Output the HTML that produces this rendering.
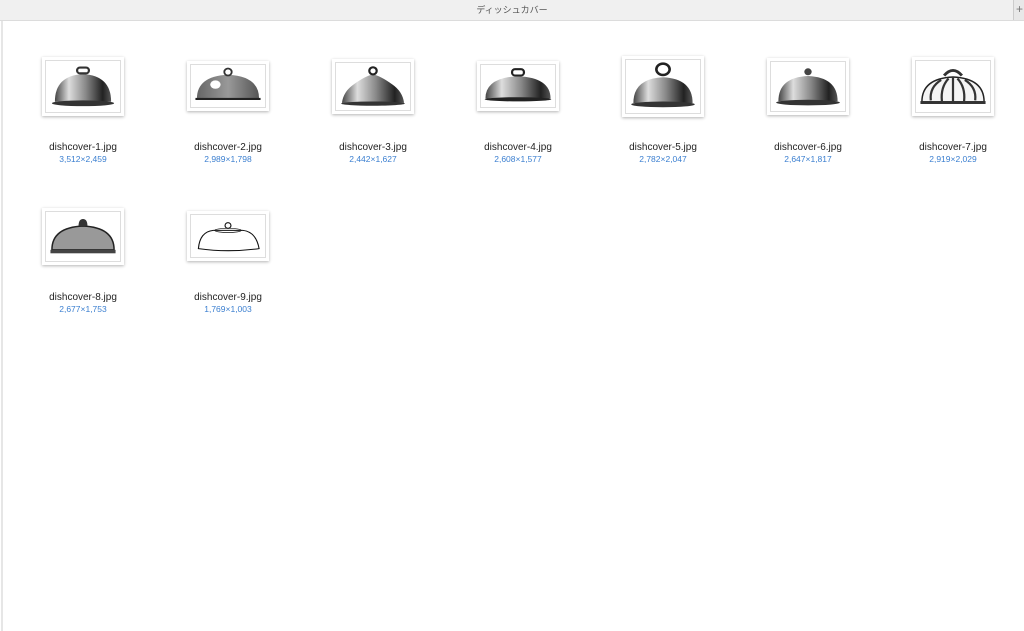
<!DOCTYPE html>
<html><head><meta charset="utf-8"><style>
html,body{margin:0;padding:0;width:1024px;height:631px;overflow:hidden;background:#fff;font-family:"Liberation Sans","Noto Sans CJK JP",sans-serif;}
.bar{position:absolute;left:0;top:0;width:1024px;height:20px;background:#f0f0f0;border-bottom:1px solid #dcdcdc;}
.title{position:absolute;left:0;width:1024px;top:3px;text-align:center;font-size:9px;color:#555;}
.rb{position:absolute;left:1013px;top:0;width:11px;height:20px;border-left:1px solid #ccc;background:#e8e8e8;color:#777;font-size:12px;line-height:18px;text-align:center;}
.lb{position:absolute;left:1px;top:21px;width:2px;height:610px;background:#e6e6e6;}
.th{position:absolute;background:#fff;box-shadow:0 1px 3px rgba(0,0,0,.3);box-sizing:border-box;padding:3px;}
.th svg{display:block;width:100%;height:100%;border:1px solid #ddd;box-sizing:border-box;}
.nm{position:absolute;width:140px;text-align:center;font-size:10px;color:#222;}
.dm{position:absolute;width:140px;text-align:center;font-size:8.5px;color:#3b7fd0;}
</style></head><body>
<div class="bar"><div class="title">ディッシュカバー</div><div class="rb">+</div></div>
<div class="lb"></div>
<svg width="0" height="0" style="position:absolute">
<defs>
<linearGradient id="g" x1="0" x2="1"><stop offset="0" stop-color="#444"/><stop offset=".25" stop-color="#ddd"/><stop offset=".55" stop-color="#888"/><stop offset=".85" stop-color="#222"/><stop offset="1" stop-color="#555"/></linearGradient>
<linearGradient id="g2" x1="0" x2="1"><stop offset="0" stop-color="#666"/><stop offset=".5" stop-color="#999"/><stop offset="1" stop-color="#555"/></linearGradient>
</defs></svg>

<div class="th" style="left:42px;top:57px;width:82px;height:59px"><svg viewBox="0 0 100 70" preserveAspectRatio="none"><path d="M12 56 Q12 20 50 18 Q88 20 88 56Z" fill="url(#g)"/><ellipse cx="50" cy="58" rx="42" ry="4" fill="#333"/><rect x="42" y="9" width="16" height="8" rx="4" fill="none" stroke="#333" stroke-width="3"/></svg></div>
<div class="nm" style="left:13px;top:142px">dishcover-1.jpg</div><div class="dm" style="left:13px;top:154px">3,512×2,459</div>

<div class="th" style="left:187px;top:61px;width:82px;height:50px"><svg viewBox="0 0 100 60" preserveAspectRatio="none"><path d="M8 48 Q8 16 50 14 Q92 16 92 48Z" fill="url(#g2)"/><ellipse cx="33" cy="28" rx="7" ry="6" fill="#fff"/><rect x="6" y="47" width="88" height="3" fill="#222"/><circle cx="50" cy="10" r="5" fill="none" stroke="#333" stroke-width="2.5"/></svg></div>
<div class="nm" style="left:158px;top:142px">dishcover-2.jpg</div><div class="dm" style="left:158px;top:154px">2,989×1,798</div>

<div class="th" style="left:332px;top:59px;width:82px;height:55px"><svg viewBox="0 0 100 66" preserveAspectRatio="none"><path d="M8 56 Q10 40 24 30 Q40 18 50 16 Q60 18 76 30 Q90 40 92 56Z" fill="url(#g)"/><ellipse cx="50" cy="57" rx="43" ry="3" fill="#333"/><circle cx="50" cy="11" r="5" fill="none" stroke="#222" stroke-width="3"/></svg></div>
<div class="nm" style="left:303px;top:142px">dishcover-3.jpg</div><div class="dm" style="left:303px;top:154px">2,442×1,627</div>

<div class="th" style="left:477px;top:61px;width:82px;height:50px"><svg viewBox="0 0 100 60" preserveAspectRatio="none"><path d="M6 48 Q6 18 50 16 Q94 18 94 48Z" fill="url(#g)"/><ellipse cx="50" cy="49" rx="45" ry="3" fill="#222"/><rect x="42" y="6" width="16" height="9" rx="4" fill="none" stroke="#222" stroke-width="3"/></svg></div>
<div class="nm" style="left:448px;top:142px">dishcover-4.jpg</div><div class="dm" style="left:448px;top:154px">2,608×1,577</div>

<div class="th" style="left:622px;top:56px;width:82px;height:61px"><svg viewBox="0 0 100 74" preserveAspectRatio="none"><path d="M10 60 Q10 26 50 24 Q90 26 90 60Z" fill="url(#g)"/><ellipse cx="50" cy="62" rx="43" ry="4" fill="#333"/><ellipse cx="50" cy="13" rx="9" ry="8" fill="none" stroke="#222" stroke-width="3.5"/></svg></div>
<div class="nm" style="left:593px;top:142px">dishcover-5.jpg</div><div class="dm" style="left:593px;top:154px">2,782×2,047</div>

<div class="th" style="left:767px;top:58px;width:82px;height:57px"><svg viewBox="0 0 100 70" preserveAspectRatio="none"><path d="M10 56 Q10 22 50 20 Q90 22 90 56Z" fill="url(#g)"/><ellipse cx="50" cy="58" rx="43" ry="4" fill="#333"/><circle cx="50" cy="14" r="5" fill="#444"/></svg></div>
<div class="nm" style="left:738px;top:142px">dishcover-6.jpg</div><div class="dm" style="left:738px;top:154px">2,647×1,817</div>

<div class="th" style="left:912px;top:57px;width:82px;height:59px"><svg viewBox="0 0 100 70" preserveAspectRatio="none"><path d="M8 56 Q8 24 50 22 Q92 24 92 56Z" fill="#f4f4f4" stroke="#222" stroke-width="2"/><path d="M20 54 Q18 36 34 26 M35 55 Q33 36 44 24 M50 56 V23 M65 55 Q67 36 56 24 M80 54 Q82 36 66 26" stroke="#333" stroke-width="3" fill="none"/><rect x="6" y="55" width="88" height="4" fill="#333"/><path d="M38 20 Q50 6 62 20" stroke="#333" stroke-width="4" fill="none"/></svg></div>
<div class="nm" style="left:883px;top:142px">dishcover-7.jpg</div><div class="dm" style="left:883px;top:154px">2,919×2,029</div>

<div class="th" style="left:42px;top:208px;width:82px;height:57px"><svg viewBox="0 0 100 70" preserveAspectRatio="none"><path d="M8 54 Q8 22 50 20 Q92 22 92 54Z" fill="#999" stroke="#222" stroke-width="2"/><rect x="6" y="54" width="88" height="5" fill="#444"/><path d="M44 20 Q44 10 50 10 Q56 10 56 20" fill="#333"/></svg></div>
<div class="nm" style="left:13px;top:292px">dishcover-8.jpg</div><div class="dm" style="left:13px;top:304px">2,677×1,753</div>

<div class="th" style="left:187px;top:211px;width:82px;height:50px"><svg viewBox="0 0 100 60" preserveAspectRatio="none"><path d="M10 48 Q12 24 30 22 L70 22 Q88 24 92 48 Q50 54 10 48Z" fill="#fff" stroke="#111" stroke-width="1.5"/><ellipse cx="50" cy="22" rx="18" ry="3" fill="none" stroke="#111" stroke-width="1"/><circle cx="50" cy="15" r="4" fill="none" stroke="#111" stroke-width="1.5"/></svg></div>
<div class="nm" style="left:158px;top:292px">dishcover-9.jpg</div><div class="dm" style="left:158px;top:304px">1,769×1,003</div>
</body></html>
